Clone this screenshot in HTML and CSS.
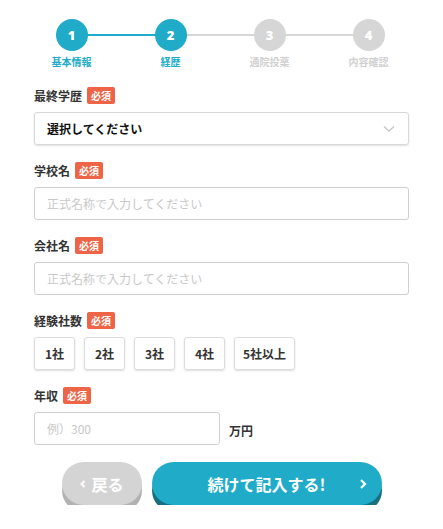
FILE: index.html
```html
<!DOCTYPE html>
<html lang="ja">
<head>
<meta charset="utf-8">
<link rel="stylesheet" href="styles.css">
</head>
<body>
<div class="page">
  <ol class="steps">
    <li class="step done"><span class="num">1</span><span class="lbl">基本情報</span></li>
    <li class="step active"><span class="num">2</span><span class="lbl">経歴</span></li>
    <li class="step"><span class="num">3</span><span class="lbl">通院投薬</span></li>
    <li class="step last"><span class="num">4</span><span class="lbl">内容確認</span></li>
  </ol>

  <form class="form">
    <div class="group">
      <div class="label">最終学歴<span class="req">必須</span></div>
      <div class="select">
        <span>選択してください</span>
        <svg class="chev" width="12" height="8" viewBox="0 0 12 8"><path d="M1 1.5 L6 6 L11 1.5" fill="none" stroke="#c8c8c8" stroke-width="1.5"/></svg>
      </div>
    </div>
    <div class="group">
      <div class="label">学校名<span class="req">必須</span></div>
      <div class="input">正式名称で入力してください</div>
    </div>
    <div class="group">
      <div class="label">会社名<span class="req">必須</span></div>
      <div class="input">正式名称で入力してください</div>
    </div>
    <div class="group">
      <div class="label">経験社数<span class="req">必須</span></div>
      <div class="choices">
        <span class="choice">1社</span>
        <span class="choice">2社</span>
        <span class="choice">3社</span>
        <span class="choice">4社</span>
        <span class="choice">5社以上</span>
      </div>
    </div>
    <div class="group">
      <div class="label">年収<span class="req">必須</span></div>
      <div class="row">
        <div class="input short">例）300</div>
        <span class="unit">万円</span>
      </div>
    </div>
    <div class="actions">
      <button type="button" class="btn back"><svg class="barr" width="6" height="10" viewBox="0 0 6 10"><path d="M4.5 2 L1.5 5 L4.5 8" fill="none" stroke="#fff" stroke-width="1.8"/></svg>戻る</button>
      <button type="button" class="btn next">続けて記入する!<svg class="narr" width="8" height="12" viewBox="0 0 8 12"><path d="M2 2 L6 6 L2 10" fill="none" stroke="#fff" stroke-width="2.2"/></svg></button>
    </div>
  </form>
</div>
</body>
</html>
```

FILE: styles.css
```css
* { box-sizing: border-box; }
html, body { margin: 0; padding: 0; background: #fff; }
body {
  font-family: "Noto Sans CJK JP", "Noto Sans", sans-serif;
  color: #333;
}
.page { width: 443px; }

.steps {
  list-style: none;
  margin: 0;
  padding: 19px 0 0 22px;
  display: grid;
  grid-template-columns: repeat(4, 99px);
}
.step {
  position: relative;
  display: flex;
  flex-direction: column;
  align-items: center;
}
.step::after {
  content: "";
  position: absolute;
  left: 50%;
  width: 100%;
  top: 15px;
  height: 2px;
  background: #d6d6d6;
  z-index: 0;
}
.step.done::after { background: #20abc8; }
.step.last::after { display: none; }
.num {
  position: relative;
  z-index: 1;
  width: 32px;
  height: 32px;
  border-radius: 50%;
  background: #d6d6d6;
  color: #fff;
  font-family: "Open Sans", sans-serif;
  font-weight: 800;
  font-size: 13px;
  line-height: 32px;
  text-align: center;
}
.done .num, .active .num { background: #20abc8; }
.lbl {
  margin-top: 5px;
  font-size: 10px;
  line-height: 12px;
  font-weight: 700;
  color: #d0d0d0;
}
.done .lbl, .active .lbl { color: #20abc8; }

.form {
  margin: 19px 34px 0;
  display: flex;
  flex-direction: column;
  gap: 17px;
}
.label {
  display: flex;
  align-items: center;
  height: 17px;
  margin-bottom: 8px;
  font-size: 12px;
  font-weight: 700;
  color: #333;
}
.req {
  margin-left: 5px;
  height: 17px;
  padding: 0 4px;
  border-radius: 2px;
  background: #ee6446;
  color: #fff;
  font-size: 10px;
  line-height: 17px;
  font-weight: 700;
}
.select, .input {
  height: 33px;
  border: 1px solid #d0d0d0;
  border-radius: 3px;
  display: flex;
  align-items: center;
  padding: 0 12px;
  font-size: 12px;
}
.select {
  justify-content: space-between;
  border-color: #d8d8d8;
  box-shadow: 0 1px 2px rgba(0,0,0,0.12);
  font-weight: 700;
  color: #111;
}
.chev { margin-right: 1px; }
.input { color: #c8c8c8; }
.choices { display: flex; gap: 9px; }
.choice {
  height: 33px;
  min-width: 41px;
  padding: 0 8px;
  border: 1px solid #dcdcdc;
  border-radius: 3px;
  box-shadow: 0 1px 2px rgba(0,0,0,0.14);
  display: flex;
  align-items: center;
  justify-content: center;
  font-size: 12px;
  font-weight: 700;
  color: #333;
}
.row { display: flex; align-items: center; gap: 9px; }
.input.short { width: 186px; }
.unit { font-size: 12px; font-weight: 700; color: #333; margin-top: 3px; }

.actions {
  display: flex;
  justify-content: center;
  gap: 10px;
  margin-top: 0;
}
.btn {
  border: none;
  height: 43px;
  border-radius: 22px;
  color: #fff;
  font-family: "Noto Sans CJK JP", sans-serif;
  font-weight: 700;
  font-size: 16px;
  display: flex;
  align-items: center;
  position: relative;
  padding: 0;
}
.back {
  width: 80px;
  background: #d4d4d4;
  box-shadow: 0 7px 0 #b2b2b2;
  padding-left: 18px;
}
.barr { margin-right: 6px; }
.next {
  width: 230px;
  background: #20abc8;
  box-shadow: 0 7px 0 #18707f;
  justify-content: center;
}
.narr { position: absolute; right: 15px; top: 16px; }
```
